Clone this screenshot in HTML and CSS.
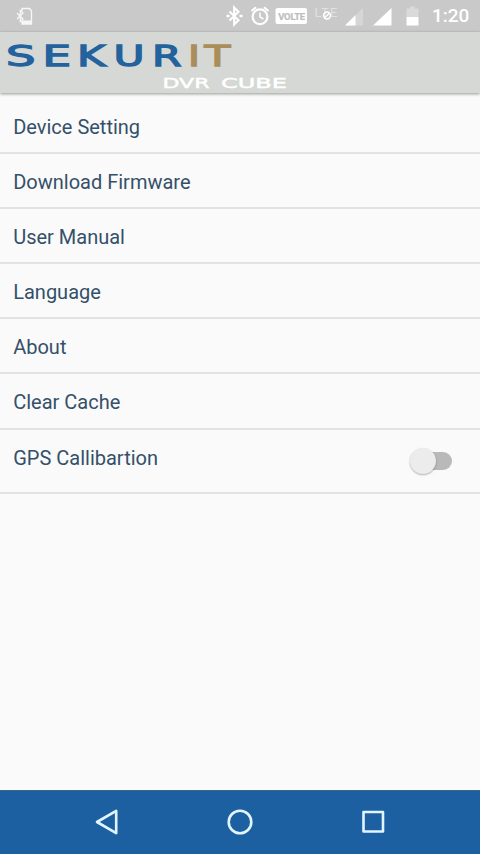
FILE: index.html
```html
<!DOCTYPE html>
<html lang="en">
<head>
<meta charset="utf-8">
<title>Sekurit DVR Cube</title>
<link rel="stylesheet" href="styles.css">
</head>
<body>
<div class="screen">
  <div class="status">
    <svg class="status-icons" viewBox="0 0 426 32" width="426" height="32" fill="none" stroke="#fff">
      <g stroke="#f7f7f7" stroke-width="1.3">
        <path d="M22 11V8.500H29.500L31.500 11V24H22V21"/>
        <path d="M22 21.500H31.500M22 23H31.500" stroke-width="1.800"/>
        <path d="M17 13L23 19L20.300 21.500V10.500L23 13L17 19"/>
      </g>
      <path d="M229.500 11.500L238.500 20.300L234.200 24.500V7.500L238.500 11.700L229.500 20.500" stroke-width="2.200"/>
      <path d="M226.500 16H229.500M239.500 16H242.500" stroke-width="2.500"/>
      <circle cx="260" cy="16.800" r="7.400" stroke-width="2.200"/>
      <path d="M251.500 11L256 7.300M268.500 11L264 7.300" stroke-width="2"/>
      <path d="M260 12.500V17L263.500 19" stroke-width="1.500"/>
      <rect x="275.500" y="8" width="31.500" height="16" rx="2" fill="#fff" stroke="none"/>
      <text class="volte" x="278.200" y="19.600" textLength="27">VOLTE</text>
      <text class="lte" x="314.500" y="17" textLength="23">LTE</text>
      <circle cx="327" cy="15.500" r="3.400" stroke-width="1.500"/>
      <path d="M325 17.500L329 13.500" stroke-width="1.200"/>
      <path d="M345 25.500L363 8V25.500Z" fill="#d6d6d6" stroke="none"/>
      <path d="M345 25.500L355.500 15V25.500Z" fill="#fff" stroke="none"/>
      <path d="M373 25.500L391.500 8V25.500Z" fill="#fff" stroke="none"/>
      <path d="M406.500 8.500H410V6.500H415V8.500H418.500V17H406.500Z" fill="#dadada" stroke="none"/>
      <path d="M406.500 17H418.500V25.500H406.500Z" fill="#fff" stroke="none"/>
    </svg>
    <span class="clock">1:20</span>
  </div>
  <header class="header">
    <svg class="logo" viewBox="0 0 300 60" width="300" height="60">
      <g class="brand">
        <text class="blue" x="6" y="34" textLength="29.500" lengthAdjust="spacingAndGlyphs">S</text>
        <text class="blue" x="42.500" y="34" textLength="28.500" lengthAdjust="spacingAndGlyphs">E</text>
        <text class="blue" x="77" y="34" textLength="28.500" lengthAdjust="spacingAndGlyphs">K</text>
        <text class="blue" x="113.500" y="34" textLength="31" lengthAdjust="spacingAndGlyphs">U</text>
        <text class="blue" x="152" y="34" textLength="29.500" lengthAdjust="spacingAndGlyphs">R</text>
        <text class="gold" x="188" y="34" textLength="12" lengthAdjust="spacingAndGlyphs">I</text>
        <text class="gold" x="204.600" y="34" textLength="25.800" lengthAdjust="spacingAndGlyphs">T</text>
      </g>
      <text class="product" x="162.500" y="55.500" textLength="47" lengthAdjust="spacingAndGlyphs">DVR</text>
      <text class="product" x="221" y="55.500" textLength="66" lengthAdjust="spacingAndGlyphs">CUBE</text>
    </svg>
  </header>
  <main class="list">
    <div class="row"><span>Device Setting</span></div>
    <div class="row"><span>Download Firmware</span></div>
    <div class="row"><span>User Manual</span></div>
    <div class="row"><span>Language</span></div>
    <div class="row"><span>About</span></div>
    <div class="row"><span>Clear Cache</span></div>
    <div class="row row-switch"><span>GPS Callibartion</span><div class="switch"><div class="thumb"></div></div></div>
  </main>
  <nav class="nav">
    <svg viewBox="0 0 28 28" width="28" height="28"><path d="M4 14L23.200 2.900V25.100Z"/></svg>
    <svg viewBox="0 0 28 28" width="28" height="28"><circle cx="14" cy="14" r="11.300"/></svg>
    <svg viewBox="0 0 28 28" width="28" height="28"><rect x="3.500" y="4" width="19.500" height="19.500"/></svg>
  </nav>
</div>
</body>
</html>
```

FILE: styles.css
```css
* { box-sizing: border-box; }
body { margin: 0; font-family: Roboto, "Liberation Sans", sans-serif; }
.screen {
  width: 480px;
  height: 854px;
  display: flex;
  flex-direction: column;
  background: #fafafa;
  overflow: hidden;
}
.status {
  height: 32px;
  flex: none;
  display: flex;
  align-items: center;
  background: #c9c9c9;
}
.status-icons { flex: none; }
.volte { font: 700 9.5px Roboto, sans-serif; fill: #bdbdbd; stroke: #bdbdbd; stroke-width: .2px; }
.lte { font: 400 13px Roboto, sans-serif; fill: #e0e0e0; stroke: none; }
.clock {
  margin-left: 6px;
  font-size: 19px;
  font-weight: 500;
  color: #fff;
  line-height: 34px;
  white-space: nowrap;
}
.header {
  height: 61px;
  flex: none;
  background: #d6d8d5;
  box-shadow: 0 1px 3px rgba(0, 0, 0, .4);
}
.logo { display: block; }
.brand { font: 400 28.5px "DejaVu Sans", sans-serif; stroke-width: 1.3px; }
.blue { fill: #24629d; stroke: #24629d; }
.gold { fill: #a98d5b; stroke: #a98d5b; }
.product { font: 400 13.5px "DejaVu Sans", sans-serif; fill: #fff; stroke: #fff; stroke-width: .4px; }
.list { flex: 1; padding-top: 5.5px; }
.row {
  height: 55.2px;
  padding: 16px 28px 0 13.2px;
  display: flex;
  align-items: flex-start;
  justify-content: space-between;
  border-bottom: 2px solid #e2e2e2;
  font-size: 20px;
  line-height: 24px;
  color: #345069;
}
.row-switch { height: 64px; }
.switch {
  width: 36px;
  height: 18px;
  margin-top: 6px;
  border-radius: 9px;
  background: #b9b9b9;
}
.thumb {
  width: 26px;
  height: 26px;
  margin: -4px 0 0 -6px;
  border-radius: 50%;
  background: #ececec;
  box-shadow: 0 1px 2px rgba(0, 0, 0, .3);
}
.nav {
  height: 64px;
  flex: none;
  display: flex;
  align-items: center;
  justify-content: center;
  gap: 105.5px;
  padding-bottom: 2px;
  background: #1c60a2;
  border-top: 1px solid #3b6588;
}
.nav svg { fill: none; stroke: #e0f5ff; stroke-width: 2.6; stroke-linejoin: round; }
```
